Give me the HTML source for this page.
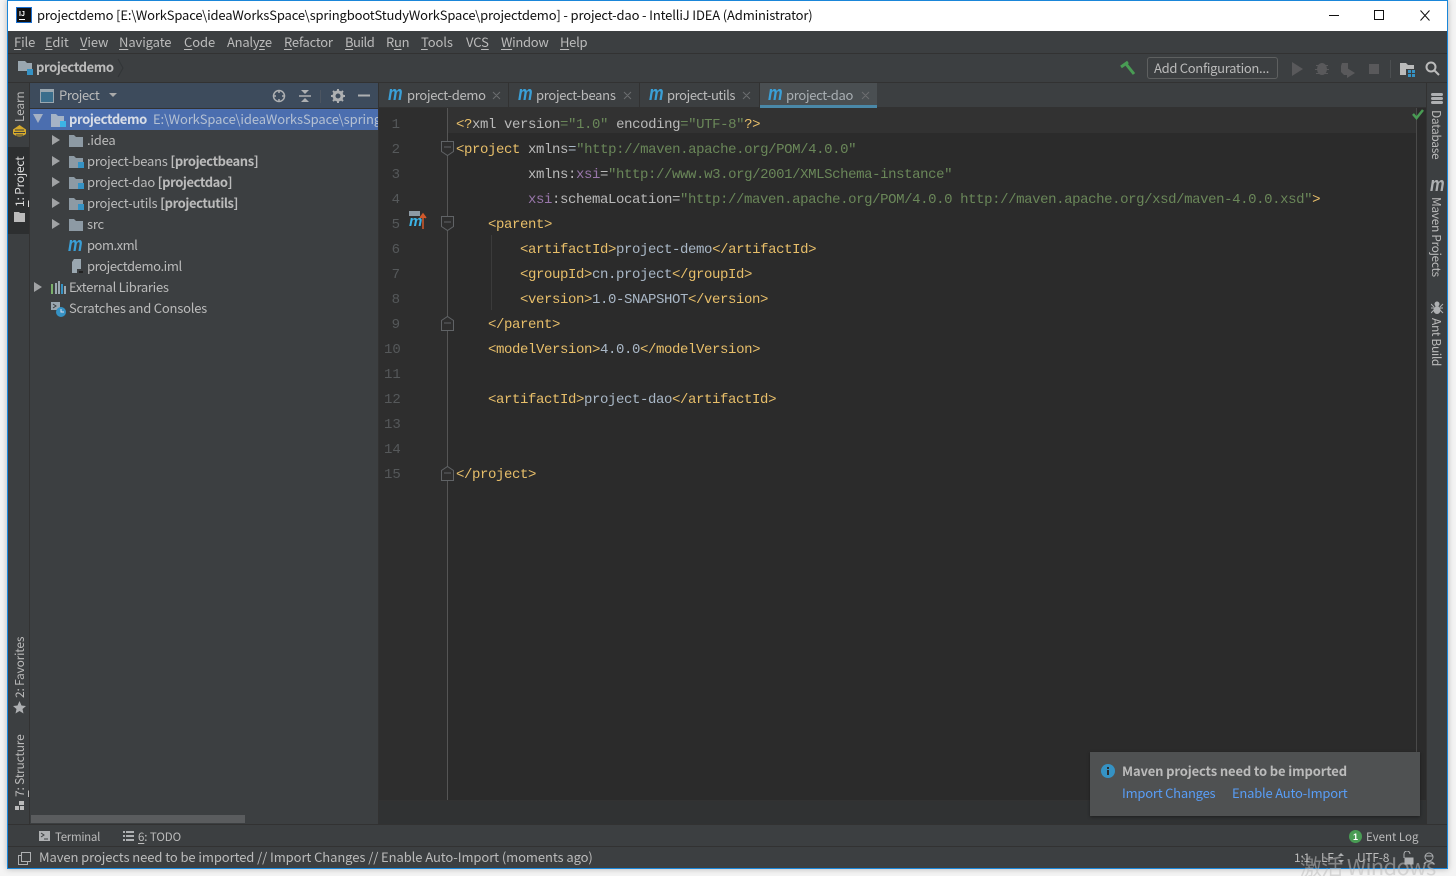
<!DOCTYPE html>
<html><head><meta charset="utf-8">
<style>
html,body{margin:0;padding:0;width:1456px;height:876px;overflow:hidden;background:#f4f4f4}
body{position:relative;font-family:"Noto Sans CJK SC","Liberation Sans",sans-serif;font-size:13px;color:#bbb}
.a,.t,.c,.n,svg.i{position:absolute}
.t{white-space:pre;line-height:18px;height:18px;letter-spacing:-.22px}
.mn{letter-spacing:-.1px}
.c{white-space:pre;font-family:"Liberation Mono",monospace;font-size:14px;letter-spacing:-.4px;line-height:25px;height:25px;color:#a9b7c6}
.n{font-family:"Liberation Mono",monospace;font-size:14px;line-height:25px;color:#55585a;width:16px;text-align:right;left:384px}
.y{color:#e8bf6a}.s{color:#6a8759}.b{color:#bababa}.p{color:#9876aa}
u{text-decoration:underline;text-underline-offset:2px}
.v{position:absolute;writing-mode:vertical-rl;white-space:pre;line-height:14px;font-size:12px;color:#bbb;letter-spacing:-.2px}
.r{letter-spacing:-.35px}
.l{transform:rotate(180deg)}
b{font-weight:700;letter-spacing:-.42px}
.m{color:#3a9fd6;font:italic 700 20px/18px 'Liberation Sans',sans-serif;transform:scaleX(.82);transform-origin:0 0;letter-spacing:0}
</style></head><body>
<div class="a" style="left:7px;top:0;width:1441px;height:869px;background:#3c3f41;border:1px solid #1a86d9;box-sizing:border-box;box-shadow:0 0 6px rgba(0,0,0,.25)"></div>
<div class="a" style="left:8px;top:1px;width:1439px;height:30px;background:#fff"></div>
<svg class="i" style="left:16px;top:7px" width="16" height="16"><rect width="16" height="16" fill="#1b6fd0"/><rect x="1" y="1" width="14" height="14" fill="#111"/><rect x="3" y="12" width="6" height="1" fill="#fff"/><text x="3" y="9" fill="#fff" font-size="7" font-weight="700" font-family="Liberation Sans">IJ</text></svg>
<div class="t" style="left:37px;top:6px;color:#111;font-size:13px;letter-spacing:-.15px">projectdemo [E:\WorkSpace\ideaWorksSpace\springbootStudyWorkSpace\projectdemo] - project-dao - IntelliJ IDEA (Administrator)</div>
<svg class="i" style="left:1320px;top:6px" width="120" height="20" fill="none" stroke="#111"><path d="M9 9.500h10"/><rect x="54.500" y="4.500" width="9" height="9"/><path d="M100.500 4.500l9 10M109.500 4.500l-9 10"/></svg>

<div class="a" style="left:8px;top:53px;width:1439px;height:1px;background:#323232"></div>
<div class="t mn" style="left:14px;top:33px"><u>F</u>ile</div>
<div class="t mn" style="left:45px;top:33px"><u>E</u>dit</div>
<div class="t mn" style="left:80px;top:33px"><u>V</u>iew</div>
<div class="t mn" style="left:119px;top:33px"><u>N</u>avigate</div>
<div class="t mn" style="left:184px;top:33px"><u>C</u>ode</div>
<div class="t mn" style="left:227px;top:33px;letter-spacing:-.25px">Analy<u>z</u>e</div>
<div class="t mn" style="left:284px;top:33px;letter-spacing:-.25px"><u>R</u>efactor</div>
<div class="t mn" style="left:345px;top:33px;letter-spacing:-.5px"><u>B</u>uild</div>
<div class="t mn" style="left:386px;top:33px;letter-spacing:-.3px">R<u>u</u>n</div>
<div class="t mn" style="left:421px;top:33px"><u>T</u>ools</div>
<div class="t mn" style="left:466px;top:33px">VC<u>S</u></div>
<div class="t mn" style="left:501px;top:33px;letter-spacing:-.3px"><u>W</u>indow</div>
<div class="t mn" style="left:560px;top:33px;letter-spacing:-.3px"><u>H</u>elp</div>

<svg class="i" style="left:18px;top:61px" width="16" height="14"><path d="M0 0h7l2 2h5v8H0z" fill="#9aa7b0"/><rect x="9" y="8" width="6" height="6" fill="#3592c4"/></svg>
<div class="t" style="left:36px;top:58px;font-weight:700;color:#bbb;letter-spacing:-.4px">projectdemo</div>
<svg class="i" style="left:117px;top:58px" width="8" height="20" fill="none" stroke="#323537"><path d="M1 1l5 9-5 9"/></svg>
<svg class="i" style="left:1119px;top:60px" width="18" height="16" fill="none" stroke="#499c54" stroke-width="3"><path d="M2 7l7-5"/><path d="M7 4l8 10"/></svg>
<div class="a" style="left:1147px;top:57px;width:131px;height:22px;box-sizing:border-box;border:1px solid #5e6060;border-radius:3px"></div>
<div class="t" style="left:1154px;top:59px;letter-spacing:-.3px">Add Configuration...</div>
<svg class="i" style="left:1290px;top:60px" width="150" height="18"><path d="M2 2l11 7-11 7z" fill="#59595b"/><g fill="#59595b"><ellipse cx="32" cy="9" rx="5" ry="6"/><path d="M26 5l12 0v1H26zM25 9h14v1H25zM26 13h12v1H26z"/></g><path d="M52 3h6v12h-4l-3-3V6z" fill="#59595b"/><path d="M57 8l8 5-8 5z" fill="#59595b"/><rect x="79" y="4" width="10" height="10" fill="#59595b"/><rect x="100" y="0" width="1" height="18" fill="#4c4f51"/><path d="M110 3h6l2 2h6v10h-14z" fill="#bbb"/><rect x="116" y="9" width="9" height="8" fill="#3c3f41"/><path d="M118 10h3v3h-3zM122 10h3v3h-3zM118 14h3v3h-3zM122 14h3v3h-3z" fill="#3592c4"/><circle cx="141" cy="7" r="4.500" fill="none" stroke="#bbb" stroke-width="2"/><path d="M144 10l5 5" stroke="#bbb" stroke-width="2"/></svg>
<div class="a" style="left:8px;top:82px;width:1439px;height:1px;background:#323232"></div>

<div class="a" style="left:29px;top:83px;width:1px;height:741px;background:#323232"></div>
<div class="a" style="left:8px;top:147px;width:21px;height:87px;background:#2d2f30"></div>
<div class="v l" style="left:13px;top:92px;height:30px">Learn</div>
<svg class="i" style="left:13px;top:124px" width="13" height="14"><path d="M6.500 1L13 5.500V10Q6.500 15 0 10V5.500z" fill="#d4a92c"/><path d="M2 6h9M1 8.500h11M3 11h7" stroke="#3c3f41"/></svg>
<div class="v l" style="left:13px;top:157px;height:50px;color:#ddd"><u>1</u>: Project</div>
<svg class="i" style="left:14px;top:212px" width="11" height="10"><path d="M0 0h5l1 1h5v9H0z" fill="#bbb"/></svg>
<div class="v l" style="left:13px;top:638px;height:60px">2: Favorites</div>
<svg class="i" style="left:13px;top:701px" width="13" height="13"><path d="M6.500 0l2 4.500 4.500.5-3.500 3 1 4.500-4-2.500-4 2.500 1-4.500L0 5l4.500-.5z" fill="#aeb0b2"/></svg>
<div class="v l" style="left:13px;top:735px;height:62px"><u>7</u>: Structure</div>
<svg class="i" style="left:15px;top:801px" width="10" height="10" fill="#bbb"><rect x="4" y="0" width="5" height="4"/><rect x="0" y="5" width="4" height="4"/><rect x="5" y="5" width="4" height="4"/></svg>

<div class="a" style="left:30px;top:83px;width:348px;height:25px;background:#3d4b5c"></div>
<div class="a" style="left:30px;top:108px;width:348px;height:1px;background:#323232"></div>
<svg class="i" style="left:40px;top:89px" width="14" height="14"><rect x=".5" y=".5" width="13" height="13" fill="#3b6e8c" stroke="#9aa7b0"/><rect x="1" y="1" width="12" height="2" fill="#9aa7b0"/></svg>
<div class="t" style="left:59px;top:86px;letter-spacing:-.4px">Project</div>
<svg class="i" style="left:109px;top:93px" width="9" height="6"><path d="M0 0h8L4 4z" fill="#aaa"/></svg>
<svg class="i" style="left:272px;top:88px" width="100" height="16" fill="none"><circle cx="7" cy="8" r="5.500" stroke="#aeb0b2" stroke-width="1.500"/><path d="M7 2v3M7 11v3M1 8h3M10 8h3" stroke="#aeb0b2" stroke-width="1.500"/><path d="M27 8h12" stroke="#aeb0b2" stroke-width="1.500"/><path d="M29 2h8l-4 4zM29 14h8l-4-4z" fill="#aeb0b2"/><rect x="48" y="2" width="1" height="13" fill="#4c5561"/><circle cx="66" cy="8" r="4" stroke="#aeb0b2" stroke-width="3"/><path d="M66 1v3M66 12v3M59 8h3M70 8h3M61 3l2 2M69 11l2 2M71 3l-2 2M63 11l-2 2" stroke="#aeb0b2" stroke-width="2"/><path d="M86 7.500h12" stroke="#aeb0b2" stroke-width="2"/></svg>

<div class="a" style="left:30px;top:109px;width:348px;height:21px;background:#4b6eaf"></div>
<svg class="i" style="left:33px;top:114px" width="11" height="10"><path d="M0 0h10L5 9z" fill="#a5b1c4"/></svg>
<svg class="i" style="left:51px;top:114px" width="16" height="14"><path d="M0 0h5l2 2h6v11H0z" fill="#a5b3c6"/><rect x="9" y="7" width="6" height="6" fill="#3cb4e6"/></svg>
<div class="t" style="left:69px;top:110px;font-weight:700;color:#d8dde6;letter-spacing:-.38px">projectdemo</div>
<div class="a" style="left:153px;top:110px;width:225px;height:18px;overflow:hidden"><div class="t" style="left:0;top:0;color:#b4c0d2;font-size:13px;letter-spacing:-.1px">E:\WorkSpace\ideaWorksSpace\springbootStudyWorkSpace</div></div>

<svg class="i" style="left:52px;top:135px" width="10" height="180" fill="#a0a2a4"><path d="M0 0l8 5-8 5zM0 21l8 5-8 5zM0 42l8 5-8 5zM0 63l8 5-8 5zM0 84l8 5-8 5z"/></svg>
<svg class="i" style="left:34px;top:282px" width="10" height="11" fill="#a0a2a4"><path d="M0 0l8 5-8 5z"/></svg>
<svg class="i" style="left:69px;top:135px" width="16" height="100"><path d="M0 0h5l2 2h7v10H0z" fill="#8d9aa4"/><path d="M0 21h5l2 2h7v10H0z" fill="#8d9aa4"/><rect x="9" y="27" width="6" height="6" fill="#3592c4"/><path d="M0 42h5l2 2h7v10H0z" fill="#8d9aa4"/><rect x="9" y="48" width="6" height="6" fill="#3592c4"/><path d="M0 63h5l2 2h7v10H0z" fill="#8d9aa4"/><rect x="9" y="69" width="6" height="6" fill="#3592c4"/><path d="M0 84h5l2 2h7v10H0z" fill="#8d9aa4"/></svg>
<div class="t" style="left:87px;top:131px">.idea</div>
<div class="t" style="left:87px;top:152px">project-beans <b>[projectbeans]</b></div>
<div class="t" style="left:87px;top:173px">project-dao <b>[projectdao]</b></div>
<div class="t" style="left:87px;top:194px">project-utils <b>[projectutils]</b></div>
<div class="t" style="left:87px;top:215px">src</div>
<div class="t m" style="left:68px;top:236px">m</div>
<div class="t" style="left:87px;top:236px;letter-spacing:-.5px">pom.xml</div>
<svg class="i" style="left:71px;top:259px" width="13" height="15"><path d="M3 0h7v10H6v4H1V3z" fill="#9aa7b0"/><rect x="8" y="12" width="4" height="2" fill="#222"/></svg>
<div class="t" style="left:87px;top:257px;letter-spacing:-.4px">projectdemo.iml</div>
<svg class="i" style="left:51px;top:281px" width="15" height="14"><rect x="0" y="3" width="2" height="10" fill="#7ab06b"/><rect x="4" y="2" width="2" height="11" fill="#9aa7b0"/><rect x="7" y="0" width="2" height="13" fill="#9aa7b0"/><rect x="10" y="3" width="2" height="10" fill="#3592c4"/><rect x="13" y="5" width="2" height="8" fill="#9aa7b0"/></svg>
<div class="t" style="left:69px;top:278px;letter-spacing:-.28px">External Libraries</div>
<svg class="i" style="left:51px;top:302px" width="16" height="16"><path d="M0 0h9v8H0z" fill="#9aa7b0"/><path d="M2 2l3 2-3 2" fill="none" stroke="#3c3f41"/><circle cx="10" cy="10" r="5" fill="#3592c4"/><path d="M10 7v3h3" fill="none" stroke="#dde" /></svg>
<div class="t" style="left:69px;top:299px">Scratches and Consoles</div>
<div class="a" style="left:31px;top:815px;width:214px;height:8px;background:#5a5c5e"></div>

<div class="a" style="left:378px;top:83px;width:1px;height:741px;background:#323232"></div>
<div class="a" style="left:379px;top:83px;width:1047px;height:24px;background:#3c3f41"></div>
<div class="a" style="left:379px;top:107px;width:1047px;height:1px;background:#323232"></div>
<div class="a" style="left:508px;top:83px;width:1px;height:24px;background:#323232"></div>
<div class="a" style="left:639px;top:83px;width:1px;height:24px;background:#323232"></div>
<div class="a" style="left:759px;top:83px;width:1px;height:24px;background:#323232"></div>
<div class="a" style="left:760px;top:83px;width:117px;height:25px;background:#4a4f52"></div>
<div class="a" style="left:760px;top:105px;width:117px;height:3px;background:#4a88a8"></div>
<div class="t m" style="left:388px;top:85px">m</div>
<div class="t m" style="left:518px;top:85px">m</div>
<div class="t m" style="left:649px;top:85px">m</div>
<div class="t m" style="left:768px;top:85px">m</div>
<div class="t" style="left:407px;top:86px;letter-spacing:-.3px">project-demo</div>
<div class="t" style="left:536px;top:86px;letter-spacing:-.3px">project-beans</div>
<div class="t" style="left:667px;top:86px;letter-spacing:-.4px">project-utils</div>
<div class="t" style="left:786px;top:86px;color:#a9afb3;letter-spacing:-.3px">project-dao</div>
<svg class="i" style="left:492px;top:91px" width="380" height="10" fill="none" stroke="#6c6e70"><path d="M1 1l7 7M8 1l-7 7M132 1l7 7M139 1l-7 7M251 1l7 7M258 1l-7 7M370 1l7 7M377 1l-7 7"/></svg>

<div class="a" style="left:379px;top:108px;width:1038px;height:692px;background:#2b2b2b"></div>
<div class="a" style="left:379px;top:108px;width:69px;height:692px;background:#2e2e2e"></div>
<div class="a" style="left:379px;top:800px;width:1047px;height:24px;background:#303233"></div>
<div class="a" style="left:379px;top:800px;width:1047px;height:1px;background:#323232"></div>
<div class="a" style="left:448px;top:108px;width:969px;height:25px;background:#323232"></div>
<div class="a" style="left:447px;top:108px;width:1px;height:692px;background:#555"></div>
<div class="a" style="left:1416px;top:108px;width:1px;height:692px;background:#4a4a4a"></div>
<div class="a" style="left:1417px;top:108px;width:9px;height:692px;background:#2b2b2b"></div>
<div class="a" style="left:491px;top:235px;width:1px;height:75px;background:#3b3b3b"></div>
<div class="a" style="left:1426px;top:83px;width:1px;height:741px;background:#323232"></div>

<svg class="i" style="left:440px;top:140px" width="16" height="345" fill="#2e2e2e" stroke="#606366"><path d="M1.500 1.500h12v10l-6 4-6-4z"/><path d="M4 7h7"/><path d="M1.500 76.500h12v10l-6 4-6-4z"/><path d="M4 82h7"/><path d="M1.500 190.500v-10l6-4 6 4v10z"/><path d="M4 183h7"/><path d="M1.500 340.500v-10l6-4 6 4v10z"/><path d="M4 333h7"/></svg>
<svg class="i" style="left:409px;top:211px" width="20" height="20"><rect x="0" y="0" width="11" height="5" fill="#8d9aa4"/><text x="0" y="15" fill="#3cb4e6" font-family="Liberation Sans" font-style="italic" font-weight="700" font-size="15">m</text><path d="M14 18V4M11 7l3-4 3 4" stroke="#d1582a" stroke-width="1.500" fill="#d1582a"/></svg>

<div class="n" style="top:113px">1</div><div class="n" style="top:138px">2</div><div class="n" style="top:163px">3</div><div class="n" style="top:188px">4</div><div class="n" style="top:213px">5</div><div class="n" style="top:238px">6</div><div class="n" style="top:263px">7</div><div class="n" style="top:288px">8</div><div class="n" style="top:313px">9</div><div class="n" style="top:338px">10</div><div class="n" style="top:363px">11</div><div class="n" style="top:388px">12</div><div class="n" style="top:413px">13</div><div class="n" style="top:438px">14</div><div class="n" style="top:463px">15</div>

<div class="c" style="left:456px;top:113px"><span class="y">&lt;?</span><span class="b">xml version</span><span class="s">="1.0"</span> <span class="b">encoding</span><span class="s">="UTF-8"</span><span class="y">?&gt;</span></div>
<div class="c" style="left:456px;top:138px"><span class="y">&lt;project</span> <span class="b">xmlns</span>=<span class="s">"http://maven.apache.org/POM/4.0.0"</span></div>
<div class="c" style="left:528px;top:163px"><span class="b">xmlns:</span><span class="p">xsi</span><span class="b">=</span><span class="s">"http://www.w3.org/2001/XMLSchema-instance"</span></div>
<div class="c" style="left:528px;top:188px"><span class="p">xsi</span><span class="b">:schemaLocation=</span><span class="s">"http://maven.apache.org/POM/4.0.0 http://maven.apache.org/xsd/maven-4.0.0.xsd"</span><span class="y">&gt;</span></div>
<div class="c" style="left:488px;top:213px"><span class="y">&lt;parent&gt;</span></div>
<div class="c" style="left:520px;top:238px"><span class="y">&lt;artifactId&gt;</span>project-demo<span class="y">&lt;/artifactId&gt;</span></div>
<div class="c" style="left:520px;top:263px"><span class="y">&lt;groupId&gt;</span>cn.project<span class="y">&lt;/groupId&gt;</span></div>
<div class="c" style="left:520px;top:288px"><span class="y">&lt;version&gt;</span>1.0-SNAPSHOT<span class="y">&lt;/version&gt;</span></div>
<div class="c" style="left:488px;top:313px"><span class="y">&lt;/parent&gt;</span></div>
<div class="c" style="left:488px;top:338px"><span class="y">&lt;modelVersion&gt;</span>4.0.0<span class="y">&lt;/modelVersion&gt;</span></div>
<div class="c" style="left:488px;top:388px"><span class="y">&lt;artifactId&gt;</span>project-dao<span class="y">&lt;/artifactId&gt;</span></div>
<div class="c" style="left:456px;top:463px"><span class="y">&lt;/project&gt;</span></div>

<svg class="i" style="left:1412px;top:109px" width="13" height="11"><path d="M1 5l3.500 4L11 1" fill="none" stroke="#499c54" stroke-width="2.500"/></svg>

<svg class="i" style="left:1431px;top:93px" width="13" height="13" fill="#aeb0b2"><rect x="0" y="0" width="12" height="3" rx="1.500"/><rect x="0" y="4" width="12" height="3" rx="1.500"/><rect x="0" y="8" width="12" height="3" rx="1.500"/></svg>
<div class="v r" style="left:1429px;top:110px;height:50px">Database</div>
<div class="t m" style="left:1430px;top:176px;color:#aeb0b2">m</div>
<div class="v r" style="left:1429px;top:197px;height:84px">Maven Projects</div>
<svg class="i" style="left:1431px;top:301px" width="13" height="13" fill="#aeb0b2"><ellipse cx="6" cy="3" rx="2.500" ry="2.500"/><ellipse cx="6" cy="9" rx="3.500" ry="4"/><path d="M0 3l3 3M12 3L9 6M0 7h3M12 7H9M0 12l3-3M12 12L9 9" stroke="#aeb0b2"/></svg>
<div class="v r" style="left:1429px;top:318px;height:50px">Ant Build</div>

<div class="a" style="left:8px;top:824px;width:1439px;height:1px;background:#323232"></div>
<svg class="i" style="left:39px;top:831px" width="11" height="10"><rect width="11" height="10" fill="#aeb0b2"/><path d="M2 2l3 2-3 2" fill="none" stroke="#3c3f41"/><path d="M5 8h4" stroke="#3c3f41"/></svg>
<div class="t" style="left:55px;top:828px;font-size:11.500px;letter-spacing:-.3px">Terminal</div>
<svg class="i" style="left:123px;top:831px" width="11" height="10" fill="#aeb0b2"><path d="M0 0h2v2H0zM3 0h8v2H3zM0 4h2v2H0zM3 4h8v2H3zM0 8h2v2H0zM3 8h8v2H3z"/></svg>
<div class="t" style="left:138px;top:828px;font-size:11.500px;letter-spacing:-.1px"><u>6</u>: TODO</div>
<svg class="i" style="left:1349px;top:830px" width="14" height="14"><circle cx="6.500" cy="6.500" r="6.500" fill="#499c54"/><text x="4" y="10" fill="#fff" font-size="9" font-weight="700" font-family="Liberation Sans">1</text></svg>
<div class="t" style="left:1366px;top:828px;font-size:11.500px;letter-spacing:0">Event Log</div>
<div class="a" style="left:8px;top:846px;width:1439px;height:1px;background:#323232"></div>
<svg class="i" style="left:18px;top:852px" width="13" height="13" fill="none" stroke="#aeb0b2"><rect x="3.500" y=".5" width="9" height="9"/><path d="M3.500 3.500H.5v9h9v-3"/></svg>
<div class="t" style="left:39px;top:848px;letter-spacing:-.08px">Maven projects need to be imported // Import Changes // Enable Auto-Import (moments ago)</div>
<div class="t" style="left:1294px;top:849px;font-size:12px">1:1</div>
<div class="t" style="left:1321px;top:849px;font-size:12px">LF</div>
<div class="t" style="left:1357px;top:849px;font-size:12px">UTF-8</div>
<svg class="i" style="left:1338px;top:853px" width="7" height="10" fill="#aeb0b2"><path d="M3 0l3 3H0zM3 10L0 7h6z"/></svg>
<svg class="i" style="left:1402px;top:851px" width="36" height="14" fill="none" stroke="#aeb0b2"><path d="M2 7V3a3 3 0 0 1 6 0"/><rect x="3" y="7" width="8" height="6" fill="#aeb0b2"/><circle cx="27" cy="6" r="4"/><path d="M22 13c1-3 9-3 10 0M23 5h8"/></svg>
<div class="t" style="left:1300px;top:854px;height:24px;line-height:24px;font-size:22px;letter-spacing:-.7px;color:rgba(190,190,190,.55)">激活 Windows</div>

<div class="a" style="left:1090px;top:752px;width:330px;height:64px;background:#4f5152;box-shadow:0 1px 3px rgba(0,0,0,.4)"></div>
<svg class="i" style="left:1101px;top:764px" width="14" height="14"><circle cx="7" cy="7" r="7" fill="#3592c4"/><rect x="6" y="6" width="2" height="5" fill="#2b2b2b"/><rect x="6" y="3" width="2" height="2" fill="#2b2b2b"/></svg>
<div class="t" style="left:1122px;top:762px;font-weight:700;color:#bbb;letter-spacing:-.14px">Maven projects need to be imported</div>
<div class="t" style="left:1122px;top:784px;color:#589df6">Import Changes</div>
<div class="t" style="left:1232px;top:784px;color:#589df6">Enable Auto-Import</div>
</body></html>
